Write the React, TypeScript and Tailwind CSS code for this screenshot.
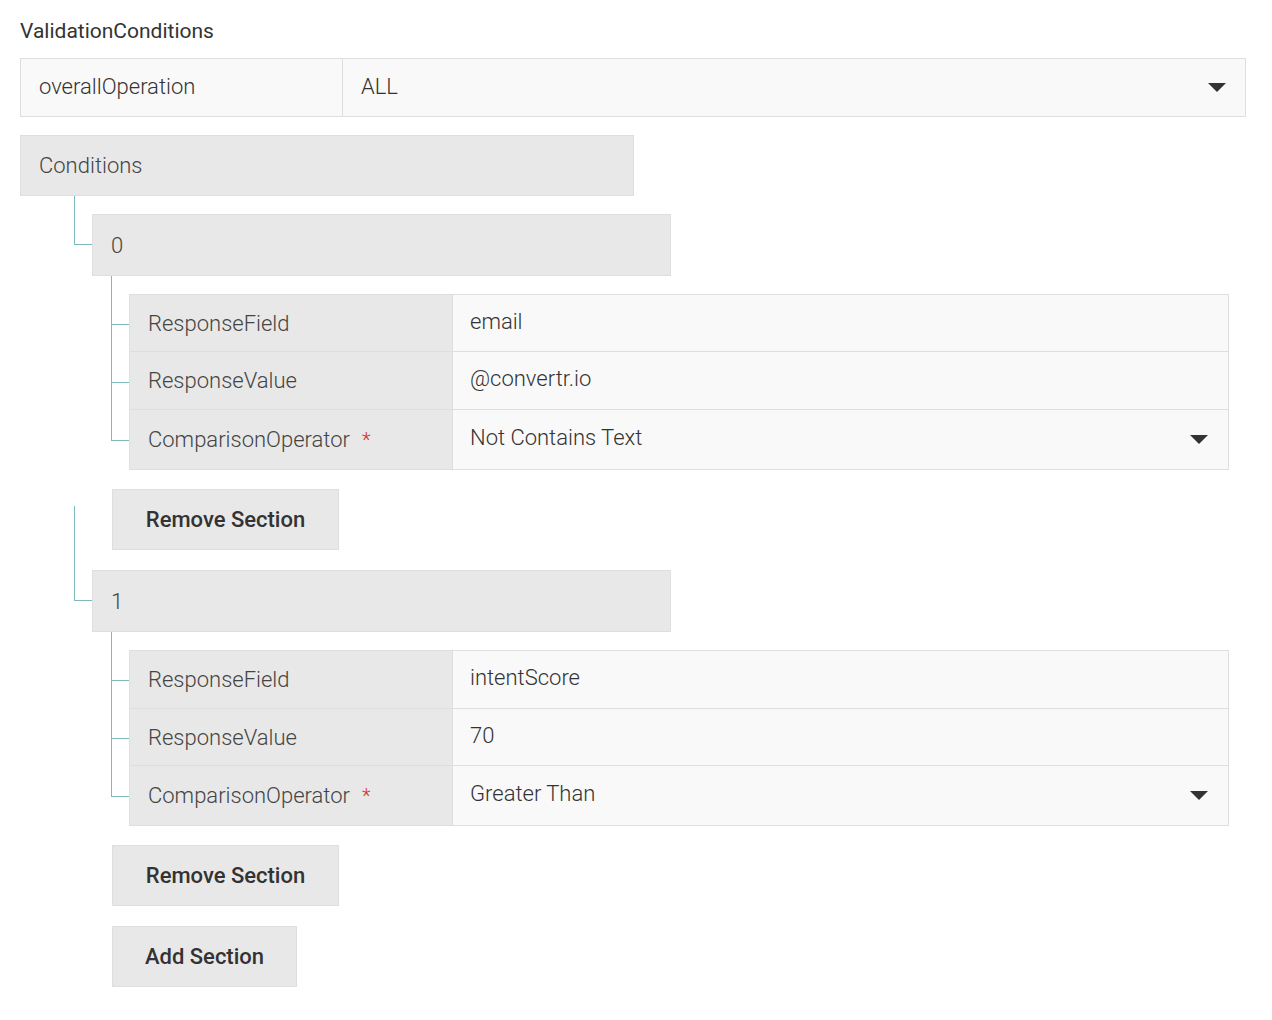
import React from 'react';

const font = { fontFamily: 'Roboto, "Liberation Sans", sans-serif' };

function Caret() {
  return (
    <svg width="18" height="10" viewBox="0 0 18 10" className="shrink-0">
      <path d="M0 0 L18 0 L9 9 Z" fill="#333" />
    </svg>
  );
}

function FieldRow({ label, value, required, select, h }: { label: string; value: string; required?: boolean; select?: boolean; h: string }) {
  return (
    <div className={`flex ${h} border-b border-[#dedede] last:border-b-0`}>
      <div className="w-[323px] shrink-0 bg-[#e8e8e8] border-r border-[#dedede] flex items-center pl-[18px] text-[22px] font-light text-[#444]">
        {label}
        {required && <span className="ml-[12px] text-[#d32f2f] text-[20px]">*</span>}
      </div>
      <div className="flex-1 bg-[#f9f9f9] flex items-center justify-between pl-[17px] pr-[20px] text-[22px] font-light text-[#333]">
        <span className={select ? 'mt-[-4px]' : 'mt-[-4px]'}>{value}</span>
        {select && <Caret />}
      </div>
    </div>
  );
}

function Item({ index, lineTop, lineH, fields }: { index: string; lineTop: string; lineH: string; fields: { label: string; value: string; required?: boolean; select?: boolean; h: string }[] }) {
  return (
    <div>
      <div className="relative">
        <div className={`absolute left-[-18px] ${lineTop} ${lineH} w-[18px] border-l border-b border-[#7db9bb]`} />
        <div className="w-[579px] h-[62px] bg-[#e8e8e8] border border-[#dedede] flex items-center pl-[18px] text-[22px] font-light text-[#444]">
          {index}
        </div>
      </div>
      <div className="relative ml-[37px] mt-[18px] mr-[23px]">
        <div className="absolute left-[-18px] top-[-18px] w-[18px] h-[165px] border-l border-[#7db9bb]" />
        <div className="absolute left-[-18px] top-[30px] w-[18px] border-t border-[#7db9bb]" />
        <div className="absolute left-[-18px] top-[88px] w-[18px] border-t border-[#7db9bb]" />
        <div className="absolute left-[-18px] top-[146px] w-[18px] border-t border-[#7db9bb]" />
        <div className="border border-[#dedede]">
          {fields.map((f) => (
            <FieldRow key={f.label} {...f} />
          ))}
        </div>
      </div>
      <button className="ml-[20px] mt-[19px] w-[227px] h-[61px] bg-[#e8e8e8] border border-[#dedede] text-[22px] font-medium text-[#333]">
        Remove Section
      </button>
    </div>
  );
}

export default function App() {
  return (
    <div className="min-h-[1020px] bg-white" style={font}>
      <div className="px-[20px] pt-[16px] pb-[33px] border-b border-[#dcdcdc]">
        <div className="text-[21px] text-[#333] h-[30px]">ValidationConditions</div>
        <div className="mt-[12px] mr-[6px] flex h-[59px] border border-[#dedede]">
          <div className="w-[322px] bg-[#f9f9f9] border-r border-[#dedede] flex items-center pl-[18px] text-[22px] font-light text-[#333]">
            <span className="mt-[-2px]">overallOperation</span>
          </div>
          <div className="flex-1 bg-[#f9f9f9] flex items-center justify-between pl-[18px] pr-[19px] text-[22px] font-light text-[#333]">
            <span className="mt-[-2px]">ALL</span>
            <Caret />
          </div>
        </div>
        <div className="mt-[18px] w-[614px] h-[61px] bg-[#e8e8e8] border border-[#dedede] flex items-center pl-[18px] text-[22px] font-light text-[#444]">
          Conditions
        </div>
        <div className="pl-[72px]">
          <div className="mt-[18px]">
            <Item
              index="0"
              lineTop="top-[-18px]"
              lineH="h-[49px]"
              fields={[
                { label: 'ResponseField', value: 'email', h: 'h-[57px]' },
                { label: 'ResponseValue', value: '@convertr.io', h: 'h-[58px]' },
                { label: 'ComparisonOperator', value: 'Not Contains Text', required: true, select: true, h: 'h-[59px]' },
              ]}
            />
          </div>
          <div className="mt-[20px]">
            <Item
              index="1"
              lineTop="top-[-64px]"
              lineH="h-[95px]"
              fields={[
                { label: 'ResponseField', value: 'intentScore', h: 'h-[58px]' },
                { label: 'ResponseValue', value: '70', h: 'h-[57px]' },
                { label: 'ComparisonOperator', value: 'Greater Than', required: true, select: true, h: 'h-[59px]' },
              ]}
            />
          </div>
          <button className="ml-[20px] mt-[20px] w-[185px] h-[61px] bg-[#e8e8e8] border border-[#dedede] text-[22px] font-medium text-[#333]">
            Add Section
          </button>
        </div>
      </div>
    </div>
  );
}
